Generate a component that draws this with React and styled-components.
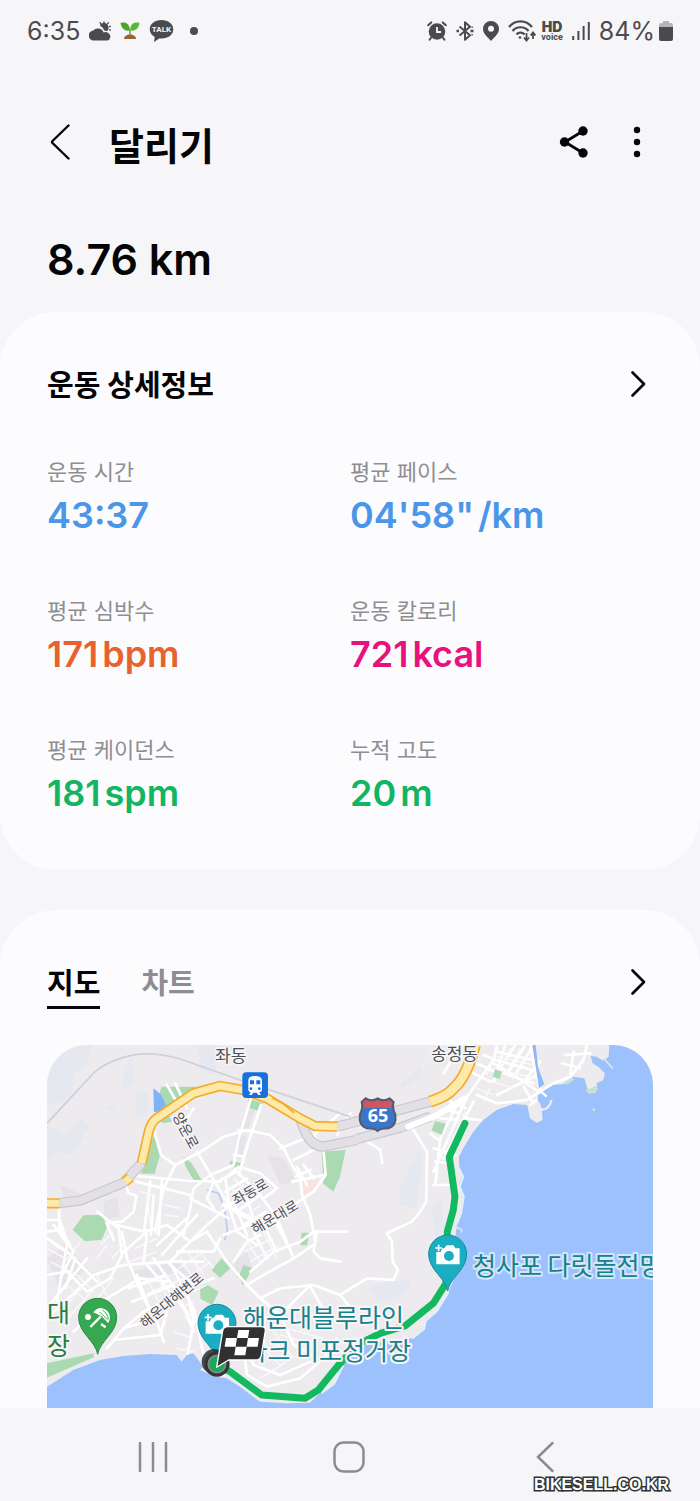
import React, { useState } from "react";
import styled, { createGlobalStyle } from "styled-components";

const GlobalStyle = createGlobalStyle`
  * {
    box-sizing: border-box;
  }

  body {
    margin: 0;
    background: #f6f6f8;
    color: #050507;
    font-family: Inter, "Noto Sans CJK KR", sans-serif;
  }

  button {
    padding: 0;
    border: 0;
    background: none;
    color: inherit;
    font: inherit;
    cursor: pointer;
  }

  svg {
    display: block;
    flex: none;
  }
`;

const Screen = styled.div`
  display: flex;
  flex-direction: column;
  min-height: 100vh;
`;

const StatusBar = styled.div`
  display: flex;
  justify-content: space-between;
  align-items: center;
  height: 62px;
  padding: 0 27px;
  color: #4b4b4e;
  font-size: 25px;
`;

const StatusGroup = styled.div`
  display: flex;
  align-items: center;
  gap: ${(props) => props.gap || `9px`};
`;

const Dot = styled.span`
  width: 8px;
  height: 8px;
  margin-left: 7px;
  border-radius: 50%;
  background: #4b4b4e;
`;

const HdVoice = styled.span`
  display: flex;
  flex-direction: column;
  align-items: center;
  font-family: Roboto, sans-serif;
  font-size: 9px;
  font-weight: 700;
  line-height: 8px;
`;

const HdMark = styled.strong`
  font-family: Inter, sans-serif;
  font-size: 14px;
  line-height: 12px;
`;

const Header = styled.header`
  display: flex;
  align-items: center;
  height: 164px;
  padding: 0 47px 4px;
`;

const IconButton = styled.button`
  display: flex;
  justify-content: center;
  align-items: center;
  width: ${(props) => props.$width || `30px`};
  height: 48px;
`;

const Title = styled.h1`
  flex: 1;
  margin: 0 0 0 34px;
  padding-top: 8px;
  font-size: 38px;
  font-weight: 700;
  line-height: 48px;
`;

const Actions = styled.div`
  display: flex;
  gap: 27px;
`;

const Distance = styled.p`
  margin: 0;
  padding: 0 47px 20px;
  font-size: 43px;
  font-weight: 600;
  line-height: 66px;
`;

const Card = styled.section`
  padding: 48px 47px ${(props) => props.$bottom || `50px`};
  border-radius: ${(props) => (props.$open ? `56px 56px 0 0` : `56px`)};
  background: #fcfcfe;

  & + & {
    margin-top: 40px;
  }
`;

const CardHead = styled.div`
  display: flex;
  justify-content: space-between;
  align-items: flex-start;
`;

const CardTitle = styled.h2`
  margin: 0;
  font-size: 29px;
  font-weight: 700;
  line-height: 52px;
`;

const Stats = styled.dl`
  display: grid;
  grid-template-columns: 1fr 1fr;
  row-gap: 53px;
  margin: 44px 0 0;
`;

const StatLabel = styled.dt`
  color: #8e8e92;
  font-size: 22px;
  line-height: 32px;
`;

const StatValue = styled.dd`
  display: flex;
  gap: 4px;
  margin: 0;
  color: ${(props) => props.color};
  font-size: 36px;
  font-weight: 600;
  line-height: 54px;
`;

const Tabs = styled.div`
  display: flex;
  gap: 41px;
`;

const Tab = styled.button`
  padding-top: 4px;
  border-bottom: 3px solid ${(props) => (props.$active ? `#050507` : `transparent`)};
  color: ${(props) => (props.$active ? `#050507` : `#8e8e92`)};
  font-size: 29px;
  font-weight: 700;
  line-height: 44px;
`;

const MapFrame = styled.div`
  margin-top: 36px;
  border-radius: 40px 40px 0 0;
  overflow: hidden;

  svg {
    width: 100%;
    height: auto;
  }
`;

const MapText = styled.text`
  fill: ${(props) => props.color || `#4c4f54`};
  stroke: ${(props) => props.$halo || `#f7f5f7`};
  stroke-width: ${(props) => (props.$place ? `4px` : `3px`)};
  stroke-linejoin: round;
  paint-order: stroke;
  font-family: "Noto Sans CJK KR", sans-serif;
  font-size: ${(props) => props.size || `14px`};
  font-weight: 400;
`;

const NavBar = styled.nav`
  position: relative;
  display: grid;
  grid-template-columns: repeat(3, 1fr);
  flex: 1;
  align-content: center;
  justify-items: center;
  min-height: 93px;
  padding: 5px 57px 0 55px;
  background: #f6f6f8;
  color: #8c8c8f;
`;

const Watermark = styled.span`
  position: absolute;
  right: 31px;
  bottom: 6px;
  color: #fff;
  font-family: "Liberation Sans", sans-serif;
  font-size: 16px;
  font-weight: 700;
  line-height: 20px;
  paint-order: stroke;
  -webkit-text-stroke: 3px #333;
`;

const stats = [
  { label: "운동 시간", value: "43:37", color: "#4a96e8" },
  { label: "평균 페이스", value: "04'58\"", unit: "/km", color: "#4a96e8" },
  { label: "평균 심박수", value: "171", unit: "bpm", color: "#e8622f" },
  { label: "운동 칼로리", value: "721", unit: "kcal", color: "#e8127f" },
  { label: "평균 케이던스", value: "181", unit: "spm", color: "#12b562" },
  { label: "누적 고도", value: "20", unit: "m", color: "#12b562" },
];

const CloudIcon = () => (
  <svg width="22" height="20" viewBox="0 0 22 20" fill="currentColor">
    <g stroke="currentColor" strokeWidth="1.3" strokeLinecap="round">
      <path d="M11.500 2.600l-.4-1M15 1.600V.8M18.600 2.800l.8-1M20.600 5.600l1-.3M20.600 8.800l1 .3" />
    </g>
    <path d="M10.800 4.200a4.400 4.400 0 018.200 4.800l-1.200 1.200q-1-.6-2.600-.6-1.200-3.400-4.400-5.400z" />
    <path d="M5 19.500a5 5 0 01-.6-10A6 6 0 0114.600 11.400q3-.8 4.600.6a4 4 0 01-1.200 7.500z" />
  </svg>
);

const SproutIcon = () => (
  <svg width="20" height="18" viewBox="0 0 20 18">
    <path d="M9.300 14V7h1.400v7z" fill="#6d9c3a" />
    <path d="M9.800 8.500C3.500 9.500 1.500 5.500.5 1c5-1.300 9.300.5 9.300 7.500z" fill="#4da62b" />
    <path d="M10.200 8.500c6.300 1 8.300-3 9.300-7.500-5-1.300-9.300.5-9.300 7.500z" fill="#5fb536" />
    <path d="M4 17c0-3 3-4.500 6-4.500s6 1.500 6 4.500z" fill="#98643a" />
  </svg>
);

const TalkIcon = () => (
  <svg width="25" height="24" viewBox="0 0 25 24">
    <path
      d="M12.500 1C5.800 1 .7 5 .7 10.300c0 3.300 2 6 5 7.700L5 23l5.200-3.500c.8.100 1.500.1 2.300.1 6.700 0 11.800-4 11.800-9.300S19.200 1 12.500 1z"
      fill="#4b4b4e"
    />
    <text
      x="12.500"
      y="13"
      textAnchor="middle"
      fill="#f6f6f8"
      fontFamily="Roboto, sans-serif"
      fontSize="8"
      fontWeight="700"
    >
      TALK
    </text>
  </svg>
);

const AlarmIcon = () => (
  <svg width="20" height="20" viewBox="0 0 20 20">
    <circle cx="10" cy="10.500" r="8.300" fill="currentColor" />
    <g fill="none" stroke="currentColor" strokeWidth="2" strokeLinecap="round">
      <path d="M1.200 4.200l3-2.800M18.800 4.200l-3-2.800M4 16.800l-1.400 2M16 16.800l1.400 2" />
    </g>
    <path d="M10 6v5h4" fill="none" stroke="#f6f6f8" strokeWidth="1.800" />
  </svg>
);

const BluetoothIcon = () => (
  <svg width="18" height="20" viewBox="0 0 18 20" fill="none" stroke="currentColor">
    <path d="M3.500 5.500l10.500 8.700-5 4.600V1.200l5 4.600L3.500 14.500" strokeWidth="2" strokeLinejoin="round" />
    <path d="M.5 10H3M14.500 10H17.500" strokeWidth="2.600" />
    <path d="M15.500 6.500l1.200-.5M15.500 13.500l1.200.5" strokeWidth="1.500" />
  </svg>
);

const LocationIcon = () => (
  <svg width="16" height="20" viewBox="0 0 16 20">
    <path
      d="M8 0a8 8 0 00-8 8c0 4.500 4.500 8 8 12 3.500-4 8-7.500 8-12a8 8 0 00-8-8zm0 4.800a3 3 0 110 6 3 3 0 010-6z"
      fill="currentColor"
    />
  </svg>
);

const WifiIcon = () => (
  <svg width="28" height="22" viewBox="0 0 28 22" fill="none" stroke="currentColor">
    <path d="M1 7C7-.5 18-.5 24 7M4.500 11c4-5 12-5 16 0M8.500 14.500c2-2.500 6-2.500 8 0" strokeWidth="2.200" />
    <circle cx="12" cy="17.500" r="1.300" fill="currentColor" stroke="none" />
    <path d="M18.500 13v7M16 17.500l2.500 3 2.500-3M25 19v-6M22.600 15.500l2.400-3 2.400 3" strokeWidth="1.800" />
  </svg>
);

const SignalIcon = () => (
  <svg width="18" height="20" viewBox="0 0 18 20" stroke="currentColor" strokeWidth="2">
    <path d="M1.200 15v4M6.400 10v9M11.600 5v14M16.800 1v18" />
  </svg>
);

const BatteryIcon = () => (
  <svg width="14" height="20" viewBox="0 0 14 20">
    <path d="M4 0h6v2h2a2 2 0 012 2v5H0V4a2 2 0 012-2h2z" fill="#b5b5b8" />
    <path d="M0 6h14v12a2 2 0 01-2 2H2a2 2 0 01-2-2z" fill="#4b4b4e" />
  </svg>
);

const ShareIcon = () => (
  <svg width="30" height="34" viewBox="0 0 30 34" fill="currentColor">
    <path d="M24 6L6 17l18 11" fill="none" stroke="currentColor" strokeWidth="2.800" />
    <circle cx="24" cy="6" r="4.700" />
    <circle cx="5.500" cy="17" r="4.700" />
    <circle cx="24" cy="28" r="4.700" />
  </svg>
);

const MoreIcon = () => (
  <svg width="8" height="32" viewBox="0 0 8 32" fill="currentColor">
    <circle cx="4" cy="4" r="3.200" />
    <circle cx="4" cy="16" r="3.200" />
    <circle cx="4" cy="28" r="3.200" />
  </svg>
);

const BackIcon = () => (
  <svg width="22" height="38" viewBox="0 0 22 38" fill="none" stroke="currentColor">
    <path d="M18.500 2.500L2.500 18q-1 1 0 2l16 15.500" strokeWidth="2.400" strokeLinecap="round" />
  </svg>
);

const NextIcon = () => (
  <svg width="16" height="28" viewBox="0 0 16 28" fill="none" stroke="currentColor">
    <path
      d="M2.500 2.500L14 14 2.500 25.500"
      strokeWidth="2.700"
      strokeLinecap="round"
      strokeLinejoin="round"
    />
  </svg>
);

const PIN = "M0 111C-7 70-57 48-57 0A57 57 0 1157 0C57 48 7 70 0 111z";

const CameraPin = ({ x, y }) => (
  <g transform={`translate(${x} ${y})`}>
    <path d={PIN} fill="#1badc1" stroke="#168c9e" strokeWidth="3" />
    <path d="M-34-6h14v-11h10l7-9h20l7 9h12v48h-70z" fill="#fff" />
    <circle cx="4" cy="6" r="15" fill="#1badc1" />
    <path d="M-27-28v20M-37-18h20" stroke="#1badc1" strokeWidth="12" />
    <path d="M-27-28v20M-37-18h20" stroke="#fff" strokeWidth="5" />
  </g>
);

const roads = [
  // west
  "M35 475L38 555 0 560M38 555L70 600M0 525H38L60 590M230 400L245 445 268 452 260 500 225 530 180 535 200 585",
  "M272 393L430 408 520 410M268 410L430 450M320 450L312 570M345 400L335 570M310 410L292 555M322 260L342 330 385 360 350 430 325 560",
  "M385 360L470 315 530 275 600 255 670 270 710 310 735 360 760 400 765 450 790 510 805 590",
  "M450 320L545 480 570 560 630 600M405 245L440 190M360 120L400 190M385 115L420 190",
  "M612 160L575 280 560 360 490 390 440 430 430 490 410 570",
  "M642 180L605 290 575 390M575 255L620 260M560 330L590 335M575 365L535 400 545 470M590 370L640 385 690 430 650 460",
  "M700 310L800 270 880 205M800 270L830 320 836 390 800 440 740 480 620 535 530 570",
  "M740 345L810 310M735 410L830 390M750 365L780 420M770 360L800 400M745 395L790 375",
  "M520 405L570 380 640 450 690 520 740 640M535 440L600 400M545 480L620 430M570 500L640 450M590 540L660 500",
  "M560 470L600 570M600 460L630 550M545 520L430 460M500 410L480 460 500 490",
  // resort blocks
  "M150 500L215 550 225 630 190 700 120 740 60 680 0 690M210 540L290 560 360 540 430 590 480 560",
  "M0 580L60 620 110 670 150 710M20 540L80 620 40 700M60 600L30 770M85 640L55 730",
  "M10 810L140 690 230 660 370 650 470 650M0 790L120 640M80 860L180 760 280 700 360 710",
  "M225 560L240 640 290 760 330 830 350 890M270 690L310 800M300 660L420 800M320 640L390 740 440 860",
  "M230 620L300 560 290 650M365 655L480 540 560 470M345 630L450 510M330 600L420 520M365 655L440 720 500 700",
  "M245 730L355 690M255 770L380 720M180 910L230 850 290 800 370 760M200 885L340 870 360 800M230 850L360 810",
  "M370 655L440 790 470 930 530 990M410 700L440 830 420 940M440 860L420 800 380 740M390 620L500 620 520 580",
  "M480 560L540 650 600 720 650 690 740 640 800 600M620 560L660 640M650 540L690 620M680 520L720 600",
  // central hill
  "M600 720L640 760 700 810 740 900 800 930M640 760L700 730 800 720 880 750M700 810L790 720M790 725L850 830M610 680L680 620 760 590 800 560H900M810 560L800 620 820 640 880 650",
  "M560 650L600 590 640 570M590 910L600 990 660 1025 760 1000 830 940 870 880M620 960L700 990 790 950M580 870L620 960",
  // east ridge
  "M1096 250L1140 320 1138 470 1120 500 1095 530 1020 565M1020 565L1035 590 1037 650 1053 675 1040 705 960 700 880 750 920 800",
  "M870 270L910 205M960 290L1000 315 1006 355",
  // Songjeong grid
  "M1084 245L1170 210 1260 155 1340 45 1350 0M1260 155L1160 380M1280 170L1190 340M1240 160L1180 280 1165 420M1160 310L1225 330M1160 420H1220M1165 350L1210 355",
  "M1340 55L1400 90 1475 140 1500 155M1350 150L1470 90M1290 150L1350 175 1440 165 1480 140 1520 115 1570 95 1610 45 1620 0",
  "M1270 80L1330 110M1290 55L1345 80M1310 30L1360 50M1300 225L1260 220M1180 220L1235 225M1195 195L1240 205M1210 170L1255 190",
  "M1375 0L1340 110M1405 0L1365 60M1435 0L1385 80M1460 0L1405 90M1480 50L1430 110M1345 20L1480 50M1345 45L1475 80M1370 85L1460 115",
  "M1430 125L1460 175M1450 180L1500 140 1520 170M1545 55L1600 70M1555 30L1630 25M1580 20L1570 85M1190 85L1230 20M1150 265L1175 285",
  "M1450 0L1465 80 1480 130",
];

const lanes = [
  "M0 610L70 650M10 650L90 690M20 600L90 640M100 590L60 640M180 600L150 640M200 560L160 600M195 640L230 600",
  "M20 830L110 720M45 840L150 720M110 810L200 700M60 720L110 760M90 690L140 740M150 690L180 750",
  "M265 610L330 580M250 650L330 620M300 700L340 780M330 690L370 780M290 720L400 680M300 745L410 700",
  "M330 520L330 570M350 480L400 490M355 510L395 515M300 450L310 540M280 440L330 455",
  "M540 420L600 470M560 400L620 460M580 390L645 460M550 450L590 420M565 475L610 450M640 480L590 520M650 500L610 530",
  "M600 590L640 650M625 580L665 645M650 560L690 640M590 620L680 580M610 650L700 600M690 500L640 530",
  "M400 640L440 700M420 620L470 690M450 610L500 670M395 670L470 620M420 700L490 650M440 740L480 720",
  "M390 760L430 740M400 790L440 770M410 820L450 800M380 860L440 880M390 910L440 920",
  "M640 900L700 960M680 860L740 940M620 930L700 900M640 1000L720 950M700 870L800 900M720 850L830 880",
  "M1355 10L1320 90M1390 10L1350 100M1420 10L1375 90M1445 20L1395 100M1465 60L1420 120M1350 35L1480 65M1340 70L1465 100",
  "M1240 200L1180 330M1255 200L1200 320M1290 130L1340 150M1310 100L1400 130M1330 130L1310 170",
];

const MapIllustration = () => (
  <svg viewBox="0 0 606 363" role="img" aria-label="달리기 경로 지도">
    <g transform="scale(0.3333)">
      <path d="M0 0h1820v1090H0z" fill="#eeebef" />
      {/* hill shading */}
      <g fill="#e6e8f0">
        <path d="M0 30L60 0H135L120 60 85 85 75 150 30 180 0 175z" />
        <path d="M0 240l60 30 40-50 30 20-50 90-50-10-30 25zM232 70l25-35 3 80-20 22-15-15zM180 185l20-10 5 15-22 5zM455 0h60l-10 90-45-15zM265 145l35-10 5 70-40 15z" />
        <path d="M1060 115l60-50 5 30-60 35zM1060 420l60-110 8 30-20 150-50-10zM1155 490l25-30 15 90-30 40zM965 720l130-20-20 50-80 20z" />
      </g>
      <g fill="#e6e3e8">
        <path d="M660 330l50 10 40 70-50 10zM170 470l40-15 10 60-50 10zM40 420l70 30-50 40zM250 680l140-30 40 40-170 10zM560 650l40-30 20 60-50 20zM0 640l60-40 60 70-80 70z" />
        <path d="M600 190l30-10-30 80-25-10zM570 265l30 10-20 70-20-10z" />
      </g>
      <g fill="#abd9b2">
        <path d="M344 125h105l-40 30-60 55-20-40zM322 270l18 58-17 58h-41l12-60zM409 335l25 20 30 50-18 10-30-50zM604 160l45 15-14 22-31-8zM549 347l36 8-5 14-30-5zM824 320l72-5-17 80-20 45-30-24z" />
        <path d="M77 555l32-44 58-2 12 40-15 35-50 5zM494 675l30-35 26 30-31 28zM589 660l27 10-28 52-12-28zM764 563h23l-7 38h-20zM459 730l20-12 36 22-19 40-35-18zM0 955l140-30v12L0 998zM325 220l40-10 10 20-25 5z" />
      </g>
      <path d="M319 130l22 18 15 30-10 20-25 4z" fill="#7eb3f5" />
      <path d="M769 405l55 5-10 24-42 12z" fill="#fbe2dd" />
      <path d="M480 435l35 10 18 50 8 60-8 30" fill="none" stroke="#b3cdf6" strokeWidth="5" />

      <g fill="none" stroke="#fff" strokeWidth="8" strokeLinejoin="round" strokeLinecap="round">
        {roads.map((d, idx) => (
          <path d={d} key={idx} />
        ))}
        <path d="M530 480L640 535" strokeWidth="14" />
      </g>
      <g fill="none" stroke="#fbfafc" strokeWidth="4">
        {lanes.map((d, idx) => (
          <path d={d} key={idx} />
        ))}
      </g>
      <path d="M1344 72l20 8-6 22-20-6zM1164 228l32 8-12 34-30-14z" fill="#abd9b2" />
      <path
        d="M0 235L139 85Q180 45 269 28Q330 22 400 42L579 105 909 215"
        fill="none"
        stroke="#cfcfd9"
        strokeWidth="5"
      />

      {/* expressway */}
      <g fill="none" strokeLinejoin="round">
        <g stroke="#c9c8cf" strokeWidth="31">
          <path d="M30 475L99 467 229 413 284 355M760 225L779 270Q800 305 829 305L929 285" />
          <path d="M929 282L1060 248 1150 215" />
          <path d="M871 245L909 235 1149 170" />
        </g>
        <g stroke="#e2e0e5" strokeWidth="24">
          <path d="M30 475L99 467 229 413 284 355M760 225L779 270Q800 305 829 305L929 285" />
          <path d="M925 283L1060 248 1155 213" />
          <path d="M871 245L909 235 1149 170" />
        </g>
        <g stroke="#f5ab2d" strokeWidth="31">
          <path d="M0 475H37M234 411L250 397M284 355L304 265Q311 232 329 220L439 145 519 123 589 135 659 160 759 220 804 243 871 245" />
          <path d="M1149 170Q1200 155 1220 130Q1260 95 1284 0" strokeWidth="36" />
        </g>
        <g stroke="#fdeaa9" strokeWidth="21">
          <path d="M0 475H37M234 411L250 397M284 355L304 265Q311 232 329 220L439 145 519 123 589 135 659 160 759 220 804 243 871 245" />
          <path d="M1149 170Q1200 155 1220 130Q1260 95 1284 0" strokeWidth="26" />
        </g>
        <path d="M675 158L710 177 742 203" stroke="#f5ab2d" strokeWidth="6" />
      </g>
      <path
        d="M1084 245L1170 210 1255 160"
        fill="none"
        stroke="#fff"
        strokeWidth="18"
        strokeLinecap="round"
      />

      {/* sea */}
      <path
        d="M1709 0L1687 0 1685 35 1669 47 1649 35 1631 33 1637 55 1654 65 1674 85 1669 105 1649 115 1651 135 1624 140 1612 100 1579 95 1549 117 1519 120 1494 135 1474 150 1471 165 1479 175 1484 190 1487 225 1469 233 1449 220 1441 180 1399 177 1349 195 1309 225 1279 260 1249 310 1236 335 1237 365 1247 385 1237 415 1247 455 1241 495 1229 545 1224 585 1239 625 1229 685 1204 740 1169 795 1134 825 1129 850 1094 880 1049 887 969 890 919 925 884 960 859 1015 819 1045 789 1073 719 1075 639 1070 579 1025 539 1000 509 995 459 975 469 965 439 925 419 930 404 950 389 930 309 927 229 933 159 945 79 975 0 1025V1090H1820V0z"
        fill="#9cc1fd"
      />
      <path d="M1456 0l8 50 12 80 16-12-18-50-8-68z" fill="#8fb8fa" />
      <path d="M1480 193q25 5 34-28" fill="none" stroke="#eeebef" strokeWidth="7" />
      <path d="M1475 133l24 22" stroke="#fff" strokeWidth="7" />
      <path d="M1672 42l25 28M1222 545l22 8v10" fill="none" stroke="#d8e9e4" strokeWidth="5" />
      <path d="M1614 137l38-16-5 22-20 3zM1545 118l28-20 10 5-20 15zM1637 190h7v8h-7z" fill="#c6e3d2" />
      <path
        d="M1236 375l12 20-10 30 12 30-8 50-12 30M1205 740l-35 57-34 30-5 25-35 28M888 962l-27 54-38 28"
        fill="none"
        stroke="#e3f0f5"
        strokeWidth="7"
      />

      {/* run */}
      <path
        d="M1254 235L1207 335 1224 455 1219 495 1201 560 1197 715 1159 775 1074 843 1000 865 930 900 879 955 814 1035 774 1060 644 1050 549 980 509 960"
        fill="none"
        stroke="#12b95f"
        strokeWidth="21"
        strokeLinejoin="round"
        strokeLinecap="round"
      />

      {/* station */}
      <rect x="586" y="82" width="77" height="77" rx="12" fill="#176fe0" />
      <path
        d="M604 106q0-13 20-13t21 13v28q0 7-8 8l5 8h-8l-5-7h-10l-5 7h-8l5-8q-7-1-7-8z"
        fill="#fff"
      />
      <path d="M609 106h12v12h-12zM628 106h12v12h-12z" fill="#176fe0" />
      <circle cx="612" cy="131" r="4" fill="#176fe0" />
      <circle cx="637" cy="131" r="4" fill="#176fe0" />

      {/* route shield */}
      <path
        d="M944 171l12-11q18 12 36 0 18 12 36 0l12 11q-5 18 5 37 5 34-20 42-24 0-33 8-9-8-33-8-25-8-20-42 10-19 5-37z"
        fill="#3975cb"
        stroke="#565a68"
        strokeWidth="6"
      />
      <path d="M948 172l9-8q18 11 35 0 17 11 35 0l9 8q-3 8-2 17h-84q1-9-2-17z" fill="#d0555e" />

      <g transform="translate(152 817)">
        <path d={PIN} fill="#36a852" stroke="#268b40" strokeWidth="3" />
        <circle cx="-29" cy="-1" r="9" fill="#fff" />
        <path d="M-13-15q18-23 42-5 14 17 3 38L12-3-13-15z" fill="#fff" />
        <path d="M9-2L-22 29M10 20l14 10" stroke="#fff" strokeWidth="7" />
        <path d="M6-16l23 23M14-22q16 10 18 28" fill="none" stroke="#36a852" strokeWidth="3" />
      </g>
      <CameraPin x={510} y={835} />
      <CameraPin x={1202} y={627} />
    </g>

    <MapText x="168" y="17" size="17px">좌동</MapText>
    <MapText x="384" y="15" size="17px">송정동</MapText>
    <MapText x="-20" y="5" transform="translate(139 86) rotate(62)">양운로</MapText>
    <MapText x="-19" y="5" transform="translate(203 147) rotate(-30)">좌동로</MapText>
    <MapText x="-26" y="5" transform="translate(228 172) rotate(-31)">해운대로</MapText>
    <MapText x="-39" y="5" transform="translate(125 255) rotate(-40)">해운대해변로</MapText>
    <MapText x="0" y="277" size="25px" color="#267f3d" $place>대</MapText>
    <MapText x="0" y="310" size="25px" color="#267f3d" $place>장</MapText>
    <MapText x="196" y="282" size="25px" color="#17808a" $place>해운대블루라인</MapText>
    <MapText x="364" y="315" size="25px" color="#17808a" textAnchor="end" $place>
      파크 미포정거장
    </MapText>
    <MapText x="426" y="230" size="25px" color="#17808a" $halo="#d3e6fb" $place>
      청사포 다릿돌전망
    </MapText>
    <text
      x="331"
      y="77"
      textAnchor="middle"
      fill="#fff"
      fontFamily="Open Sans, sans-serif"
      fontSize="18"
      fontWeight="700"
    >
      65
    </text>

    {/* finish flag */}
    <g transform="scale(0.3333)">
      <circle cx="502" cy="950" r="38" fill="#2d2f31" opacity="0.850" />
      <circle cx="510" cy="957" r="38" fill="#333537" />
      <circle cx="510" cy="957" r="26" fill="#18a75b" stroke="#858789" strokeWidth="5" />
      <path
        d="M543 795h100q14 0 12 13l-12 73q-3 14-16 14h-82l-36 22 18-109q2-13 16-13z"
        transform="translate(0 50)"
        fill="#303133"
        stroke="#fff"
        strokeWidth="4"
        strokeLinejoin="round"
      />
      <path
        d="M574 855h33l-4 24h-33zM537 879h33l-4 26h-33zM603 879h33l-4 26h-33zM566 905h33l-4 26h-33z"
        fill="#fff"
      />
    </g>
  </svg>
);

const App = () => {
  const [tab, setTab] = useState("지도");

  return (
    <Screen>
      <GlobalStyle />
      <StatusBar>
        <StatusGroup>
          <span>6:35</span>
          <CloudIcon />
          <SproutIcon />
          <TalkIcon />
          <Dot />
        </StatusGroup>
        <StatusGroup>
          <AlarmIcon />
          <BluetoothIcon />
          <LocationIcon />
          <StatusGroup gap={`5px`}>
            <WifiIcon />
            <HdVoice>
              <HdMark>HD</HdMark>
              voice
            </HdVoice>
          </StatusGroup>
          <SignalIcon />
          <StatusGroup gap={`4px`}>
            <span>84%</span>
            <BatteryIcon />
          </StatusGroup>
        </StatusGroup>
      </StatusBar>

      <Header>
        <IconButton $width={`28px`} aria-label="뒤로">
          <BackIcon />
        </IconButton>
        <Title>달리기</Title>
        <Actions>
          <IconButton $width={`40px`} aria-label="공유">
            <ShareIcon />
          </IconButton>
          <IconButton $width={`32px`} aria-label="더보기">
            <MoreIcon />
          </IconButton>
        </Actions>
      </Header>

      <Distance>8.76 km</Distance>

      <Card>
        <CardHead>
          <CardTitle>운동 상세정보</CardTitle>
          <IconButton aria-label="운동 상세정보 보기">
            <NextIcon />
          </IconButton>
        </CardHead>
        <Stats>
          {stats.map((stat) => (
            <div key={stat.label}>
              <StatLabel>{stat.label}</StatLabel>
              <StatValue color={stat.color}>
                <span>{stat.value}</span>
                {stat.unit && <span>{stat.unit}</span>}
              </StatValue>
            </div>
          ))}
        </Stats>
      </Card>

      <Card $open $bottom={`0px`}>
        <CardHead>
          <Tabs role="tablist">
            {["지도", "차트"].map((name) => (
              <Tab
                key={name}
                role="tab"
                aria-selected={tab === name}
                $active={tab === name}
                onClick={() => setTab(name)}
              >
                {name}
              </Tab>
            ))}
          </Tabs>
          <IconButton aria-label="지도 보기">
            <NextIcon />
          </IconButton>
        </CardHead>
        <MapFrame>
          <MapIllustration />
        </MapFrame>
      </Card>

      <NavBar>
        <IconButton aria-label="최근 앱">
          <svg width="30" height="30" viewBox="0 0 30 30" stroke="currentColor" strokeWidth="2.500">
            <path d="M2 1v28M15 1v28M28 1v28" strokeLinecap="round" />
          </svg>
        </IconButton>
        <IconButton aria-label="홈">
          <svg width="32" height="32" viewBox="0 0 32 32" fill="none" stroke="currentColor">
            <rect x="1.500" y="1.500" width="29" height="29" rx="9" strokeWidth="2.500" />
          </svg>
        </IconButton>
        <IconButton aria-label="이전">
          <svg width="18" height="32" viewBox="0 0 18 32" fill="none" stroke="currentColor">
            <path d="M16.500 2L2 16l14.500 14" strokeWidth="2.500" strokeLinecap="round" />
          </svg>
        </IconButton>
        <Watermark>BIKESELL.CO.KR</Watermark>
      </NavBar>
    </Screen>
  );
};

export default App;
